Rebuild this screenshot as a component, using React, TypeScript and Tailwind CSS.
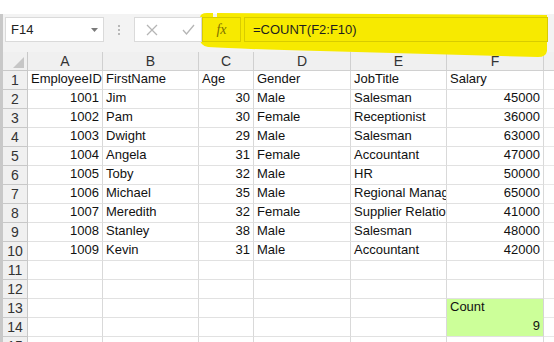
import React from "react";

type Cell = string | number | null;

const cols = ["A", "B", "C", "D", "E", "F"];

const rows: Cell[][] = [
  ["EmployeeID", "FirstName", "Age", "Gender", "JobTitle", "Salary"],
  [1001, "Jim", 30, "Male", "Salesman", 45000],
  [1002, "Pam", 30, "Female", "Receptionist", 36000],
  [1003, "Dwight", 29, "Male", "Salesman", 63000],
  [1004, "Angela", 31, "Female", "Accountant", 47000],
  [1005, "Toby", 32, "Male", "HR", 50000],
  [1006, "Michael", 35, "Male", "Regional Manager", 65000],
  [1007, "Meredith", 32, "Female", "Supplier Relations", 41000],
  [1008, "Stanley", 38, "Male", "Salesman", 48000],
  [1009, "Kevin", 31, "Male", "Accountant", 42000],
  [null, null, null, null, null, null],
  [null, null, null, null, null, null],
  [null, null, null, null, null, "Count"],
  [null, null, null, null, null, 9],
  [null, null, null, null, null, null],
];

const FormulaBar = () => (
  <div className="h-[38px] bg-[#f3f3f3] border-l-[3px] border-[#c8c8c8] flex items-start pt-[3px] pl-[2px]">
    <div className="relative z-10 w-[99px] h-[25px] bg-white border border-[#dadada] flex items-center justify-between pl-[5px] pr-[5px]">
      <span className="text-[13px] text-[#222]">F14</span>
      <svg width="7" height="4" viewBox="0 0 7 4">
        <path d="M0,0 L7,0 L3.5,4 Z" fill="#7a7a7a" />
      </svg>
    </div>
    <div className="w-[30px] h-[25px] flex flex-col items-center justify-center gap-[2px]">
      <span className="w-[2px] h-[2px] bg-[#b8b8b8]" />
      <span className="w-[2px] h-[2px] bg-[#b8b8b8]" />
      <span className="w-[2px] h-[2px] bg-[#b8b8b8]" />
    </div>
    <div className="relative z-10 w-[68px] h-[25px] bg-white border border-[#dadada] flex items-center">
      <svg className="ml-[11px]" width="12" height="12" viewBox="0 0 12 12">
        <path d="M1,1 L11,11 M11,1 L1,11" stroke="#b5b5b5" strokeWidth="1.3" fill="none" />
      </svg>
      <svg className="ml-[24px]" width="13" height="11" viewBox="0 0 13 11">
        <path d="M1,6 L4.5,10 L12,1" stroke="#b5b5b5" strokeWidth="1.3" fill="none" />
      </svg>
    </div>
    <div className="relative z-10 w-[39px] h-[25px] bg-[#f7ea00] border border-[#d8cc00] flex items-center justify-center">
      <span className="text-[14px] italic text-[#7d7200] font-['Liberation_Serif',serif]">fx</span>
    </div>
    <div className="relative z-10 ml-[3px] w-[304px] h-[25px] bg-[#f7ea00] border border-[#d8cc00] flex items-center pl-[8px]">
      <span className="text-[13px] text-[#1e1e1e]">=COUNT(F2:F10)</span>
    </div>
  </div>
);

const Grid = () => (
  <div className="grid grid-cols-[28px_75px_96px_55px_97px_96px_97px_10px] auto-rows-[19px]">
    <div className="bg-[#f0f0f0] border-l-[3px] border-r border-b border-[#c8c8c8] flex items-end justify-end pr-[3px] pb-[2px]">
      <svg width="11" height="11" viewBox="0 0 11 11">
        <path d="M11,0 L11,11 L0,11 Z" fill="#c6c6c6" />
      </svg>
    </div>
    {cols.map((c) => (
      <div
        key={c}
        className="bg-[#f0f0f0] border-r border-b border-[#d0d0d0] flex items-center justify-center text-[14px] text-[#333]"
      >
        {c}
      </div>
    ))}
    <div className="bg-[#f0f0f0] border-b border-[#d0d0d0]" />
    {rows.map((r, i) => (
      <React.Fragment key={i}>
        <div className="bg-[#f0f0f0] border-l-[3px] border-r border-b border-[#c8c8c8] flex items-center justify-center text-[14px] text-[#333]">
          {i + 1}
        </div>
        {r.map((v, j) => {
          const green = j === 5 && (i === 12 || i === 13);
          return (
            <div
              key={j}
              className={`overflow-hidden whitespace-nowrap flex items-end pb-[1px] px-[3px] text-[13px] text-[#111] border-r border-b ${
                typeof v === "number" ? "justify-end" : "justify-start"
              } ${
                green
                  ? i === 12
                    ? "bg-[#ccff99] border-[#ccff99] border-r-[#d4d4d4] border-b-[#ccff99]"
                    : "bg-[#ccff99] border-r-[#d4d4d4] border-b-[#e1e1e1]"
                  : "border-[#e1e1e1] border-r-[#d9d9d9]"
              }`}
            >
              {v}
            </div>
          );
        })}
        <div className="bg-white border-b border-[#e8e8e8]" />
      </React.Fragment>
    ))}
  </div>
);

export default function App() {
  return (
    <div className="relative w-[554px] h-[342px] overflow-hidden bg-white font-['Liberation_Sans',Arial,sans-serif]">
      {/* highlighter scribble over the formula bar */}
      <svg className="absolute left-0 top-[13px] pointer-events-none" width="554" height="46" viewBox="0 0 554 46">
        <path
          d="M200,5 Q200,0 207,0 L213,0 L213,5 L217,5 L217,0 L547,2 L547,38 Q546,44 538,44 L320,38 Q240,36 208,34 Q200,33 200,25 Z"
          fill="#f7ea00"
        />
      </svg>
      <div className="h-[14px] bg-white" />
      <FormulaBar />
      <Grid />
    </div>
  );
}
